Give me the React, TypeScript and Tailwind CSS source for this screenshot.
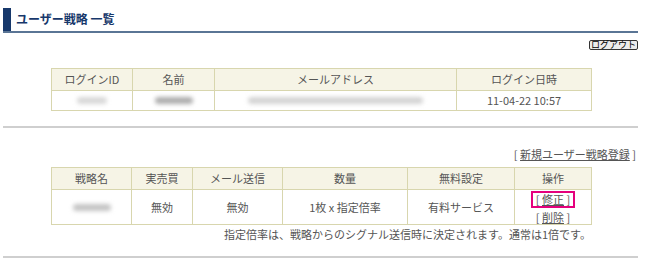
import React from "react"

const font = { fontFamily: '"Noto Sans CJK JP", "Noto Sans", sans-serif' }

// blurred placeholder for masked personal data
const Blur = ({ w, tone = "bg-[#b8b8b8]" }: { w: string; tone?: string }) => (
  <div className={`mx-auto h-[7px] rounded-full blur-[2px] ${w} ${tone}`} />
)

const th = "border border-[#d8d6ae] bg-[#f6f4e6] font-normal h-[22px] p-0"
const td = "border border-[#d8d6ae] bg-white p-0"

export default function App() {
  return (
    <div
      style={font}
      className="h-[266px] w-[650px] overflow-hidden bg-white pl-[3px] pr-[12px] text-[11px] leading-none text-[#555]"
    >
      <div className="mt-[8px] flex h-[25px] items-stretch border-b-2 border-[#5a7595]">
        <div className="w-[8px] bg-[#17386b]" />
        <div className="ml-[5px] flex items-center pb-[1px] text-[12px] font-bold text-[#17386b]">
          ユーザー戦略 一覧
        </div>
      </div>

      <div className="mt-[7px] flex justify-end">
        <button className="h-[10px] rounded-[2px] border border-[#333] bg-[#ececec] px-[1px] text-[9px] leading-[8px] text-black">
          ログアウト
        </button>
      </div>

      <table className="ml-[48px] mt-[18px] w-[540px] table-fixed border-collapse text-center">
        <colgroup>
          <col className="w-[81px]" />
          <col className="w-[82px]" />
          <col className="w-[242px]" />
          <col className="w-[135px]" />
        </colgroup>
        <thead>
          <tr>
            <th className={th}>ログインID</th>
            <th className={th}>名前</th>
            <th className={th}>メールアドレス</th>
            <th className={th}>ログイン日時</th>
          </tr>
        </thead>
        <tbody>
          <tr className="h-[20px]">
            <td className={td}>
              <Blur w="w-[30px]" tone="bg-[#d8d8d8]" />
            </td>
            <td className={td}>
              <Blur w="w-[38px]" tone="bg-[#adadad]" />
            </td>
            <td className={td}>
              <Blur w="w-[175px]" tone="bg-[#d4d4d4]" />
            </td>
            <td className={td}>11-04-22 10:57</td>
          </tr>
        </tbody>
      </table>

      <div className="mt-[15px] h-[2px] bg-[#cfcfcf]" />

      <div className="mt-[21px] flex justify-end pr-[2px]">
        <span>
          [ <span className="underline">新規ユーザー戦略登録</span> ]
        </span>
      </div>

      <table className="ml-[48px] mt-[7px] w-[540px] table-fixed border-collapse text-center">
        <colgroup>
          <col className="w-[80px]" />
          <col className="w-[61px]" />
          <col className="w-[90px]" />
          <col className="w-[125px]" />
          <col className="w-[107px]" />
          <col className="w-[77px]" />
        </colgroup>
        <thead>
          <tr>
            <th className={th}>戦略名</th>
            <th className={th}>実売買</th>
            <th className={th}>メール送信</th>
            <th className={th}>数量</th>
            <th className={th}>無料設定</th>
            <th className={th}>操作</th>
          </tr>
        </thead>
        <tbody>
          <tr className="h-[35px]">
            <td className={td}>
              <Blur w="w-[38px]" tone="bg-[#c4c4c4]" />
            </td>
            <td className={td}>無効</td>
            <td className={td}>無効</td>
            <td className={td}>1枚 x 指定倍率</td>
            <td className={td}>有料サービス</td>
            <td className={td}>
              <div className="flex flex-col items-center gap-[4px]">
                <span className="border-2 border-[#e5007d] px-[3px] py-[1px]">
                  [ <span className="underline">修正</span> ]
                </span>
                <span>
                  [ <span className="underline">削除</span> ]
                </span>
              </div>
            </td>
          </tr>
        </tbody>
      </table>

      <div className="ml-[48px] mt-[4px] w-[540px] text-right">
        指定倍率は、戦略からのシグナル送信時に決定されます。通常は1倍です。
      </div>

      <div className="mt-[16px] h-[2px] bg-[#cfcfcf]" />
    </div>
  )
}
